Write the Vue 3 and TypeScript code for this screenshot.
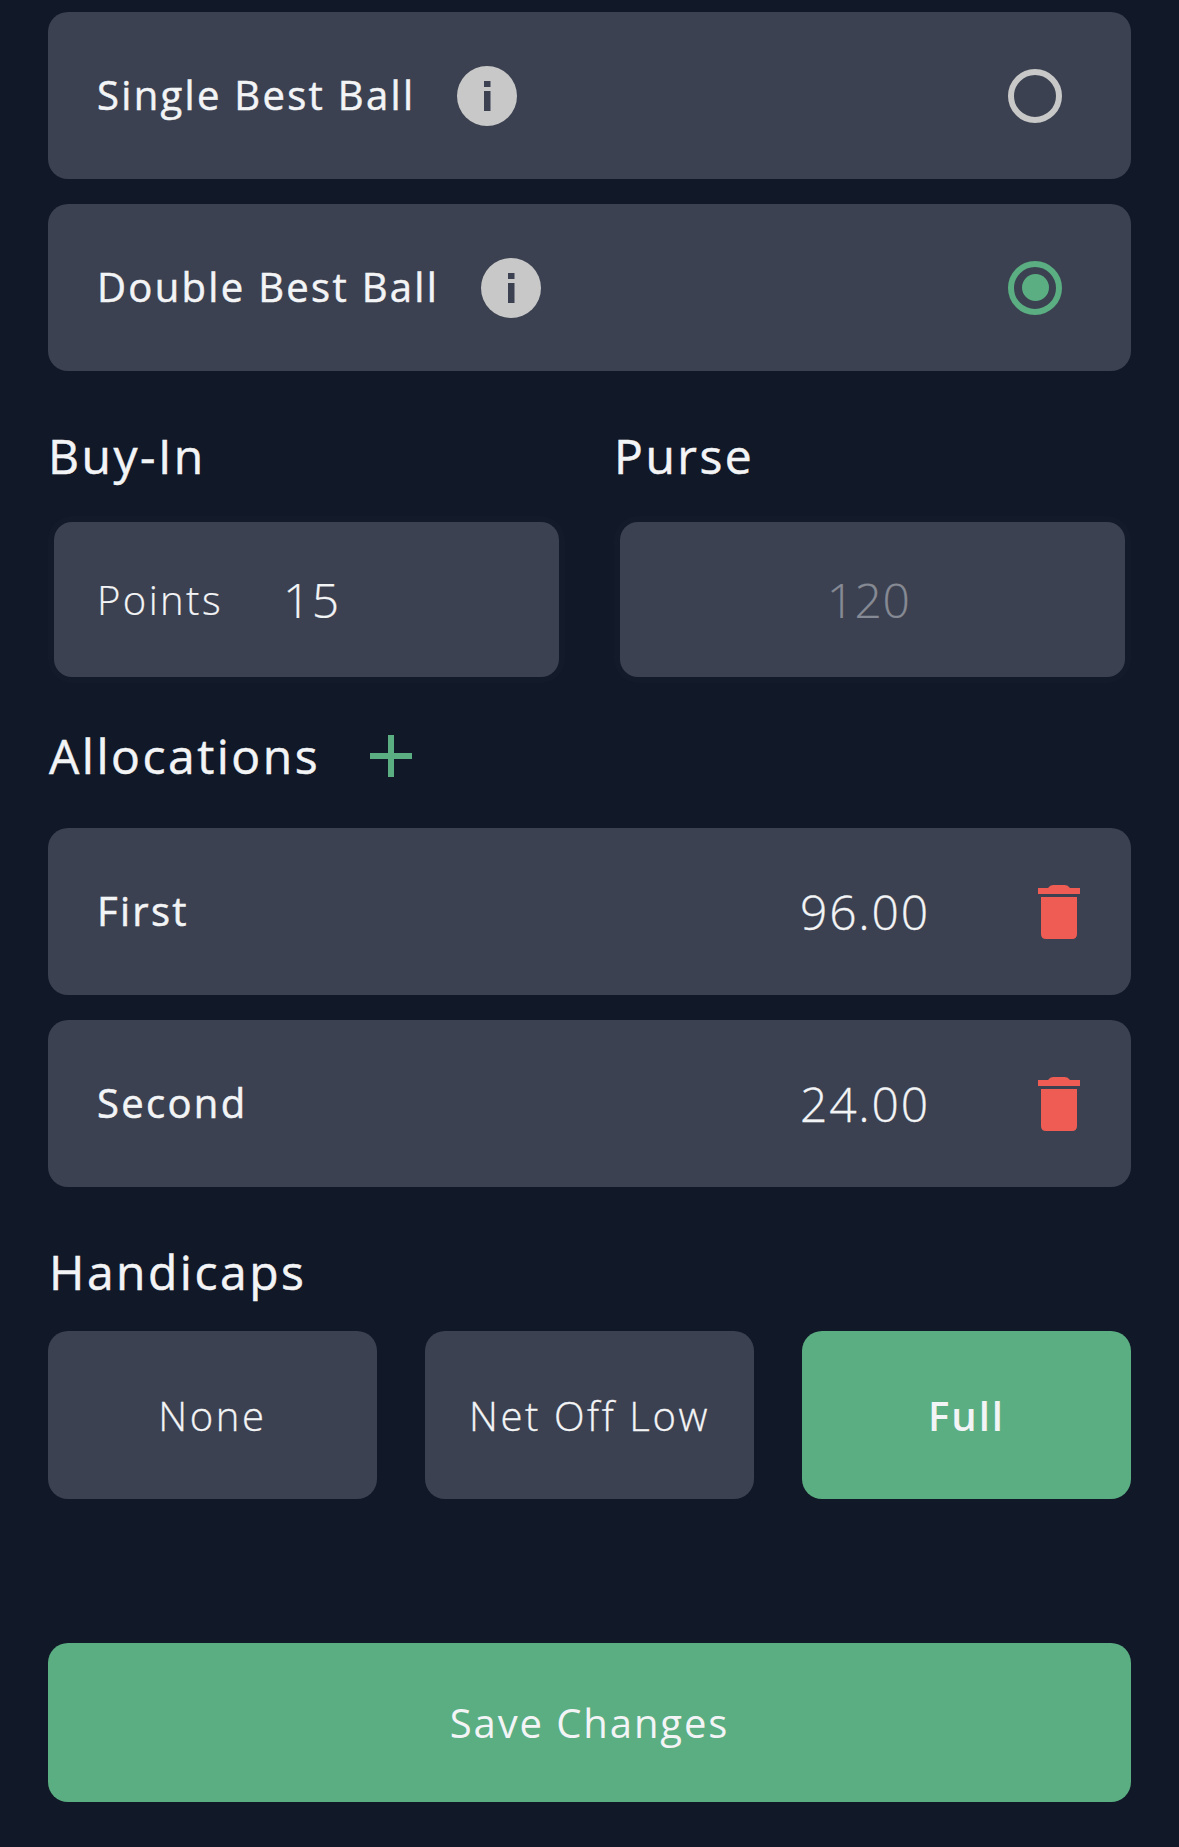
<template>
  <div class="page">
    <div class="card" v-for="game in games" :key="game.name">
      <span class="card-name">{{ game.name }}</span>
      <svg class="info" viewBox="0 0 60 60">
        <circle cx="30" cy="30" r="30" fill="#c8c8c8" />
        <rect x="27" y="15" width="6.5" height="6" fill="#3b4150" />
        <rect x="27" y="25" width="6.5" height="20" fill="#3b4150" />
      </svg>
      <span class="radio" :class="{ on: game.selected }"></span>
    </div>

    <div class="money">
      <div class="money-col">
        <h2 class="label">Buy-In</h2>
        <div class="field">
          <span class="field-unit">Points</span>
          <span class="field-value">15</span>
        </div>
      </div>
      <div class="money-col">
        <h2 class="label">Purse</h2>
        <div class="field center">
          <span class="field-value muted">120</span>
        </div>
      </div>
    </div>

    <div class="alloc-head">
      <h2 class="label">Allocations</h2>
      <svg class="plus" viewBox="0 0 42 42">
        <path d="M21 0V42M0 21H42" stroke="#5aae82" stroke-width="6" fill="none" />
      </svg>
    </div>

    <div class="card alloc" v-for="row in allocations" :key="row.place">
      <span class="card-name">{{ row.place }}</span>
      <span class="amount">{{ row.amount }}</span>
      <svg class="trash" viewBox="0 0 42 54">
        <path d="M10 3Q12 0 15 0H27Q30 0 32 3H42V9H0V3Z" fill="#ee5c54" />
        <path d="M3 12H39V49Q39 54 34 54H8Q3 54 3 49Z" fill="#ee5c54" />
      </svg>
    </div>

    <h2 class="label handicap-label">Handicaps</h2>
    <div class="handicaps">
      <div class="choice" v-for="h in handicaps" :key="h" :class="{ active: h === 'Full' }">{{ h }}</div>
    </div>

    <div class="save">Save Changes</div>
  </div>
</template>

<script setup lang="ts">
const games = [
  { name: 'Single Best Ball', selected: false },
  { name: 'Double Best Ball', selected: true }
]
const allocations = [
  { place: 'First', amount: '96.00' },
  { place: 'Second', amount: '24.00' }
]
const handicaps = ['None', 'Net Off Low', 'Full']
</script>

<style>
html, body {
  background: #111827;
}
</style>

<style scoped>
.page {
  box-sizing: border-box;
  height: 1847px;
  padding: 12px 48px 0;
  background: #111827;
  font-family: "Open Sans", sans-serif;
  color: #f3f4f6;
}

.card {
  display: flex;
  align-items: center;
  height: 167px;
  margin-bottom: 25px;
  padding: 0 48px 0 49px;
  background: #3b4150;
  border-radius: 20px;
}

.card-name {
  padding-bottom: 2px;
  font-size: 40px;
  font-weight: 400;
  letter-spacing: 2.3px;
  -webkit-text-stroke: 0.5px #f3f4f6;
}

.info {
  width: 60px;
  height: 60px;
  margin-left: 42px;
}

.radio {
  box-sizing: border-box;
  position: relative;
  width: 54px;
  height: 54px;
  margin-left: auto;
  margin-right: 21px;
  border: 6px solid #c8c8c8;
  border-radius: 50%;
}

.radio.on {
  border-color: #5aae82;
}

.radio.on::after {
  content: "";
  position: absolute;
  left: 7.5px;
  top: 7.5px;
  width: 27px;
  height: 27px;
  border-radius: 50%;
  background: #5aae82;
}

.money {
  display: flex;
  gap: 61px;
  margin-top: 52px;
  padding: 0 6px;
}

.money-col {
  flex: 1;
}

.label {
  margin: 0;
  font-size: 48px;
  font-weight: 400;
  line-height: 66px;
  letter-spacing: 2.5px;
  -webkit-text-stroke: 0.5px #f3f4f6;
}

.money-col .label {
  margin-left: -6px;
}

.field {
  display: flex;
  align-items: center;
  height: 155px;
  margin-top: 33px;
  padding: 0 43px;
  background: #3b4150;
  border-radius: 18px;
  box-shadow: 0 0 0 6px #131a29;
}

.field.center {
  justify-content: center;
  padding-right: 51px;
}

.field-unit {
  font-size: 40px;
  font-weight: 300;
  letter-spacing: 2.4px;
  -webkit-text-stroke: 0.2px #f3f4f6;
}

.field-value {
  margin-left: 60px;
  font-size: 48px;
  font-weight: 300;
  letter-spacing: 1.5px;
  -webkit-text-stroke: 0.2px #f3f4f6;
}

.field-value.muted {
  margin-left: 0;
  letter-spacing: 0.5px;
  color: #868a94;
  -webkit-text-stroke: 0.2px #868a94;
}

.alloc-head {
  display: flex;
  align-items: center;
  margin-top: 46px;
  margin-bottom: 39px;
  padding-left: 1px;
}

.plus {
  width: 42px;
  height: 42px;
  margin-left: 50px;
}

.alloc {
  padding-right: 51px;
}

.amount {
  margin-left: auto;
  font-size: 48px;
  font-weight: 300;
  letter-spacing: 1.8px;
  -webkit-text-stroke: 0.3px #f3f4f6;
}

.trash {
  width: 42px;
  height: 54px;
  margin-left: 108px;
}

.handicap-label {
  margin-top: 52px;
  margin-left: 1px;
}

.handicaps {
  display: flex;
  gap: 48px;
  margin-top: 26px;
}

.choice {
  flex: 1;
  display: flex;
  align-items: center;
  justify-content: center;
  height: 168px;
  background: #3b4150;
  border-radius: 20px;
  font-size: 40px;
  font-weight: 300;
  letter-spacing: 2.6px;
  -webkit-text-stroke: 0.3px #f3f4f6;
}

.choice.active {
  background: #5aae82;
  font-weight: 600;
  letter-spacing: 2px;
  -webkit-text-stroke: 0;
}

.save {
  display: flex;
  align-items: center;
  justify-content: center;
  height: 159px;
  margin-top: 144px;
  background: #5aae82;
  border-radius: 20px;
  font-size: 40px;
  font-weight: 400;
  letter-spacing: 1.9px;
}
</style>
